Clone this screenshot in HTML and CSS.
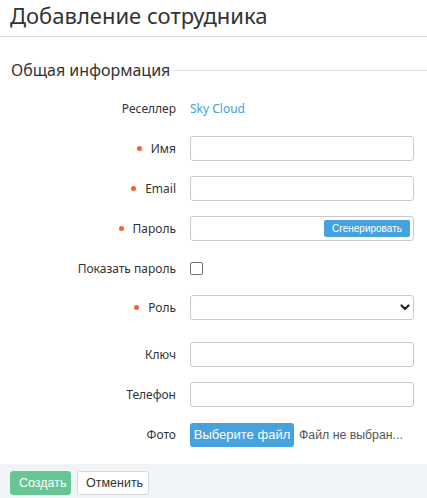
FILE: index.html
```html
<!DOCTYPE html>
<html lang="ru">
<head>
<meta charset="utf-8">
<title>Добавление сотрудника</title>
<link rel="stylesheet" href="styles.css">
</head>
<body>
<h1 class="page-title">Добавление сотрудника</h1>
<div class="section-head"><span>Общая информация</span></div>
<form class="form">
  <div class="row">
    <label class="label">Реселлер</label>
    <div class="field"><a class="link" href="#">Sky Cloud</a></div>
  </div>
  <div class="row">
    <label class="label req">Имя</label>
    <div class="field"><input class="input" type="text"></div>
  </div>
  <div class="row">
    <label class="label req">Email</label>
    <div class="field"><input class="input" type="text"></div>
  </div>
  <div class="row">
    <label class="label req">Пароль</label>
    <div class="field pass"><input class="input" type="password"><button type="button" class="gen">Сгенерировать</button></div>
  </div>
  <div class="row row-check">
    <label class="label">Показать пароль</label>
    <div class="field"><span class="check"></span></div>
  </div>
  <div class="row row-role">
    <label class="label req">Роль</label>
    <div class="field select-wrap"><select class="input select"><option></option></select>
      <svg class="chev" width="10" height="7" viewBox="0 0 10 7"><path d="M1.5 1.5 L5 5 L8.5 1.5" fill="none" stroke="#222" stroke-width="2.2" stroke-linecap="round" stroke-linejoin="round"/></svg>
    </div>
  </div>
  <div class="row">
    <label class="label">Ключ</label>
    <div class="field"><input class="input" type="text"></div>
  </div>
  <div class="row">
    <label class="label">Телефон</label>
    <div class="field"><input class="input" type="text"></div>
  </div>
  <div class="row">
    <label class="label">Фото</label>
    <div class="field file"><span class="file-btn">Выберите файл</span><span class="file-name">Файл не выбран...</span></div>
  </div>
</form>
<div class="footer">
  <button type="button" class="btn btn-green">Создать</button>
  <button type="button" class="btn btn-white">Отменить</button>
</div>
</body>
</html>
```
FILE: styles.css
```css
html, body {
  margin: 0;
  padding: 0;
  background: #fff;
}
body {
  font-family: "Noto Sans", "Open Sans", sans-serif;
  font-size: 12px;
  color: #333;
  width: 427px;
  height: 498px;
  overflow: hidden;
}
.page-title {
  margin: 0;
  padding: 0 10px 6px;
  font-size: 22px;
  font-weight: 400;
  line-height: 30px;
  color: #333;
  border-bottom: 1px solid #d9dee4;
}
.section-head {
  display: flex;
  align-items: center;
  margin: 21px 0 14px 11px;
  font-size: 16px;
  line-height: 24px;
  color: #333;
}
.section-head::after {
  content: "";
  flex: 1;
  height: 1px;
  background: #d9dee4;
  margin-left: 4px;
}
.form {
  margin: 0;
}
.row {
  display: grid;
  grid-template-columns: 176px 224px;
  column-gap: 14px;
  height: 25px;
  margin-bottom: 15px;
  align-items: center;
}
.row-check {
  height: 24px;
}
.row-role {
  margin-bottom: 22px;
}
.label {
  text-align: right;
  line-height: 25px;
  white-space: nowrap;
}
.req::before {
  content: "";
  display: inline-block;
  width: 5px;
  height: 5px;
  border-radius: 50%;
  background: #f0603a;
  margin-right: 9px;
  vertical-align: 2px;
}
.field {
  display: flex;
  align-items: center;
  height: 25px;
  position: relative;
}
.link {
  color: #4a9fd9;
  text-decoration: none;
}
.input {
  box-sizing: border-box;
  width: 224px;
  height: 25px;
  margin: 0;
  border: 1px solid #c6cbd2;
  border-radius: 3px;
  background: #fff;
  font: inherit;
  padding: 0 6px;
}
.gen {
  position: absolute;
  right: 4px;
  top: 4px;
  height: 17px;
  width: 86px;
  padding: 0;
  border: none;
  border-radius: 2px;
  background: #45a2df;
  color: #fff;
  font-family: "Liberation Sans", Arial, sans-serif;
  font-size: 10px;
  line-height: 17px;
}
.check {
  display: block;
  box-sizing: border-box;
  width: 13px;
  height: 13px;
  border: 1px solid #707070;
  border-radius: 2px;
  background: #fff;
}
.select {
  -webkit-appearance: none;
  appearance: none;
}
.chev {
  position: absolute;
  right: 4px;
  top: 9px;
}
.file-btn {
  box-sizing: border-box;
  height: 24px;
  width: 104px;
  background: #45a2df;
  border-radius: 3px;
  color: #fff;
  font-family: "Liberation Sans", Arial, sans-serif;
  font-size: 13px;
  line-height: 24px;
  text-align: center;
}
.file-name {
  margin-left: 5px;
  color: #555;
  font-family: "Liberation Sans", Arial, sans-serif;
  font-size: 12.3px;
  white-space: nowrap;
}
.footer {
  margin-top: 17px;
  background: #f1f4f7;
  padding: 7px 10px;
  display: flex;
  gap: 6px;
  height: 36px;
  box-sizing: border-box;
}
.btn {
  box-sizing: border-box;
  height: 24px;
  padding: 0 8px;
  border-radius: 3px;
  font-family: "Liberation Sans", Arial, sans-serif;
  font-size: 12.5px;
  margin: 0;
}
.btn-green {
  background: #66c592;
  border: 1px solid #66c592;
  color: #fff;
  width: 61px;
}
.btn-white {
  background: #fff;
  border: 1px solid #d4d8dd;
  color: #333;
  width: 72px;
}
```
